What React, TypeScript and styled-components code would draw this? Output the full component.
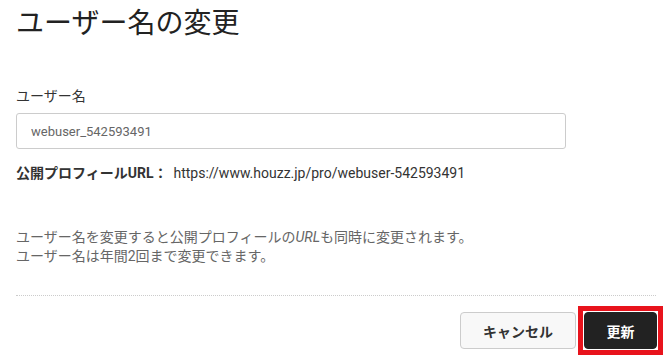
import styled, { createGlobalStyle } from 'styled-components';

const GlobalStyle = createGlobalStyle`
  body {
    margin: 0;
    background: #fff;
    font-family: Roboto, "Noto Sans CJK JP", sans-serif;
    color: #222;
  }
`;

const Page = styled.div`
  width: 640px;
  padding: 0 13px 0 16px;
`;

const Title = styled.h1`
  margin: 0;
  padding-top: 4px;
  font-size: 28px;
  font-weight: 400;
  line-height: 40px;
  color: #222;
`;

const Field = styled.div`
  margin-top: 42px;
`;

const Label = styled.label`
  display: block;
  font-size: 14px;
  line-height: 20px;
  color: #333;
  margin-bottom: 7px;
`;

const Input = styled.input`
  box-sizing: border-box;
  width: 550px;
  height: 36px;
  padding: 0 14px;
  border: 1px solid #ccc;
  border-radius: 3px;
  font-family: Roboto, "Noto Sans CJK JP", sans-serif;
  font-size: 13px;
  color: #666;
  caret-color: #222;
  outline: none;
`;

const UrlRow = styled.p`
  margin: 14px 0 0;
  font-size: 14px;
  line-height: 20px;
  color: #333;
`;

const UrlLabel = styled.strong`
  font-weight: 700;
  margin-right: 6px;
`;

const Help = styled.p`
  margin: 45px 0 0;
  font-size: 14px;
  line-height: 19px;
  color: #666;
  em {
    font-style: italic;
  }
`;

const Footer = styled.div`
  margin-top: 29px;
  border-top: 1px dotted #ccc;
  padding-top: 10px;
  display: flex;
  justify-content: flex-end;
  align-items: center;
  gap: 2px;
`;

const Button = styled.button<{ $primary?: boolean }>`
  box-sizing: border-box;
  height: 37px;
  width: ${(p) => (p.$primary ? '73px' : '116px')};
  padding: 0;
  border-radius: 4px;
  font-family: Roboto, "Noto Sans CJK JP", sans-serif;
  font-size: 14px;
  font-weight: 700;
  cursor: pointer;
  border: 1px solid ${(p) => (p.$primary ? '#222' : '#ccc')};
  background: ${(p) => (p.$primary ? '#222' : '#f8f8f8')};
  color: ${(p) => (p.$primary ? '#fff' : '#333')};
`;

// red annotation box drawn around the submit button
const Highlight = styled.span`
  display: inline-flex;
  border: 5px solid #e8131c;
  padding: 1px;
  margin-right: -7px;
`;

export default function App() {
  return (
    <>
      <GlobalStyle />
      <Page>
        <Title>ユーザー名の変更</Title>
        <Field>
          <Label htmlFor="username">ユーザー名</Label>
          <Input
            id="username"
            defaultValue="webuser_542593491"
            autoFocus
            onFocus={(e) => e.currentTarget.setSelectionRange(0, 0)}
          />
        </Field>
        <UrlRow>
          <UrlLabel>公開プロフィールURL：</UrlLabel>
          https://www.houzz.jp/pro/webuser-542593491
        </UrlRow>
        <Help>
          ユーザー名を変更すると公開プロフィールの<em>URL</em>も同時に変更されます。
          <br />
          ユーザー名は年間2回まで変更できます。
        </Help>
        <Footer>
          <Button>キャンセル</Button>
          <Highlight>
            <Button $primary>更新</Button>
          </Highlight>
        </Footer>
      </Page>
    </>
  );
}
